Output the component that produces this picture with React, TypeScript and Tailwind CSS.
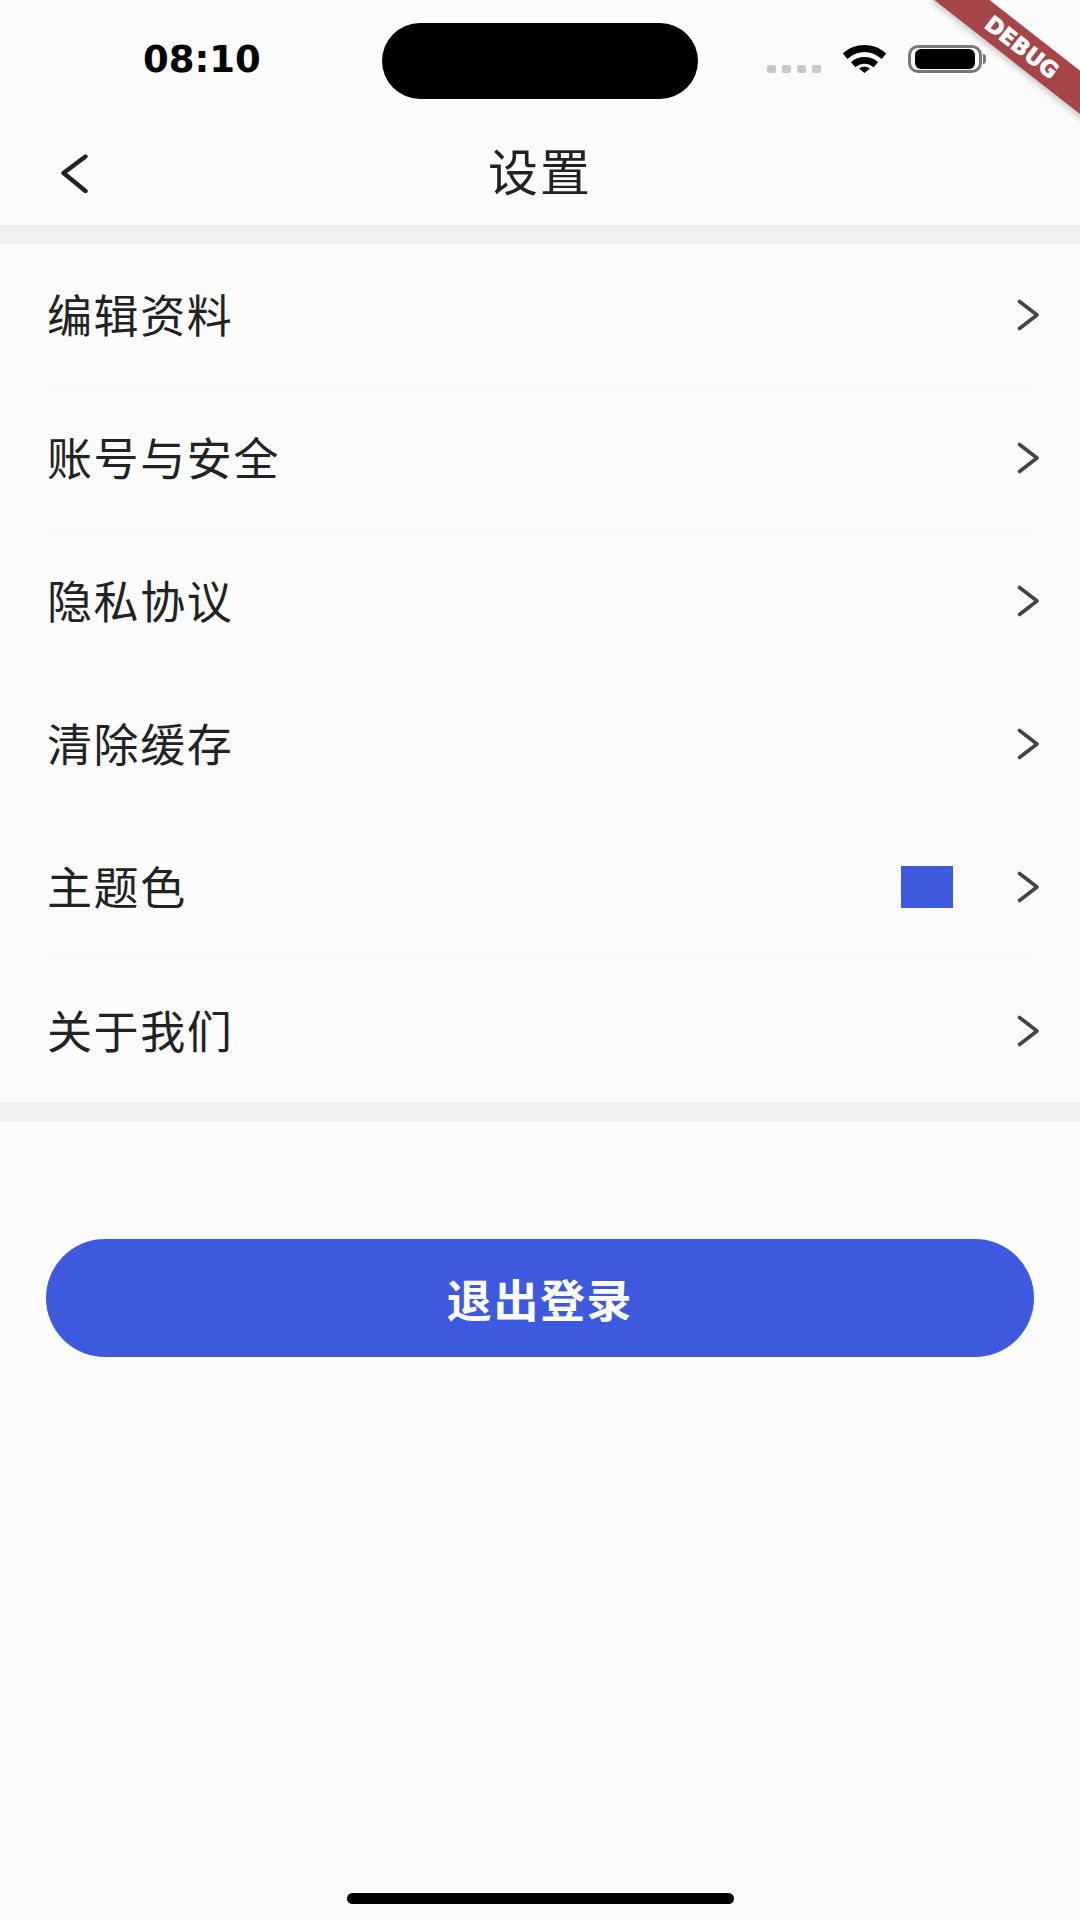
import React from "react";

const CJK = "font-['Noto_Sans_CJK_SC','Noto_Sans_CJK_JP',sans-serif]";

function Chevron({ className, dir = "right" }: { className?: string; dir?: "left" | "right" }) {
  const d = dir === "right" ? "M2.5 2 L20 15.5 L2.5 29" : "M24.5 2.5 L2.5 19 L24.5 37";
  return (
    <svg className={className} viewBox={dir === "right" ? "0 0 23 31" : "0 0 27 39"} fill="none" stroke="currentColor" strokeWidth={dir === "right" ? 3.6 : 4.4} strokeLinecap="round" strokeLinejoin="round">
      <path d={d} />
    </svg>
  );
}

function StatusBar() {
  return (
    <div className="relative flex h-[121px] items-start">
      <span className="ml-[143px] mt-[38px] w-[116px] font-['DejaVu_Sans',sans-serif] text-[37px] leading-[44px] font-bold whitespace-nowrap text-black">08:10</span>
      <div className="ml-[123px] mt-[23px] h-[76px] w-[316px] rounded-full bg-black" />
      <div className="ml-[69px] mt-[65px] flex gap-[6px]">
        {[0, 1, 2, 3].map((i) => (
          <div key={i} className="h-[8px] w-[9px] rounded-[2px] bg-[#c8c8c8]" />
        ))}
      </div>
      <svg className="ml-[20px] mt-[45px] h-[28px] w-[47px]" viewBox="0 0 49 31" fill="#000">
        <path d="M0.5 9.5 C14 -3 35 -3 48.5 9.5 L43.5 15.5 C32 5 17 5 5.5 15.5 Z" />
        <path d="M9.5 19 C18 11.5 31 11.5 39.5 19 L34.5 24.5 C28 19.5 21 19.5 14.5 24.5 Z" />
        <path d="M18.5 26 C22 23.5 27 23.5 30.5 26 L24.5 31 Z" />
      </svg>
      <div className="ml-[20px] mt-[45px] flex items-center">
        <div className="flex h-[28px] w-[74px] items-center justify-center rounded-[10px] border-[3px] border-[#777777]">
          <div className="h-[20px] w-[60px] rounded-[6px] bg-black" />
        </div>
        <div className="ml-[1px] h-[10px] w-[3px] rounded-r-[3px] bg-[#777777]" />
      </div>
    </div>
  );
}

function DebugBanner() {
  return (
    <div className="pointer-events-none absolute right-0 top-0 h-[150px] w-[160px] overflow-hidden">
      <div className="absolute left-[2px] top-[30px] flex h-[34px] w-[200px] rotate-[38deg] items-center justify-center bg-[#a64548] font-['DejaVu_Sans',sans-serif] text-[22px] font-bold text-white [-webkit-text-stroke:0.8px_white] shadow-[0_3px_6px_rgba(0,0,0,0.2)]">
        DEBUG
      </div>
    </div>
  );
}

const rows = ["编辑资料", "账号与安全", "隐私协议", "清除缓存", "主题色", "关于我们"];

export default function App() {
  return (
    <div className={`relative flex h-[1920px] w-[1080px] flex-col overflow-hidden bg-[#fbfbfc] ${CJK}`}>
      <StatusBar />
      <DebugBanner />
      <header className="relative flex h-[104px] items-center justify-center">
        <Chevron dir="left" className="absolute left-[61px] top-[33px] h-[39px] w-[27px] text-[#222222]" />
        <h1 className="mb-[8px] text-[50px] leading-none font-normal tracking-[2px] text-[#222222]">设置</h1>
      </header>
      <div className="h-[19px] bg-[#f0f0f0]" />
      <ul className="flex flex-col">
        {rows.map((label) => (
          <li key={label} className="ml-[47px] mr-[46px] flex h-[143px] items-center border-b border-[#f6f6f7] last:border-b-0">
            <span className="mb-[3px] flex-1 text-[45px] leading-none tracking-[1.6px] text-[#222222]">{label}</span>
            {label === "主题色" && <div className="mr-[64px] h-[42px] w-[52px] bg-[#3d5adf]" />}
            <Chevron className="-mr-[6px] h-[32px] w-[23px] text-[#444444]" />
          </li>
        ))}
      </ul>
      <div className="h-[19px] bg-[#f0f0f0]" />
      <button className="mx-[46px] mt-[118px] flex h-[118px] w-[988px] items-center justify-center rounded-full bg-[#3d5adf] text-[45px] leading-none font-bold tracking-[1.6px] text-white">
        退出登录
      </button>
      <div className="mt-auto mb-[16px] ml-[347px] h-[11px] w-[387px] rounded-full bg-black" />
    </div>
  );
}
